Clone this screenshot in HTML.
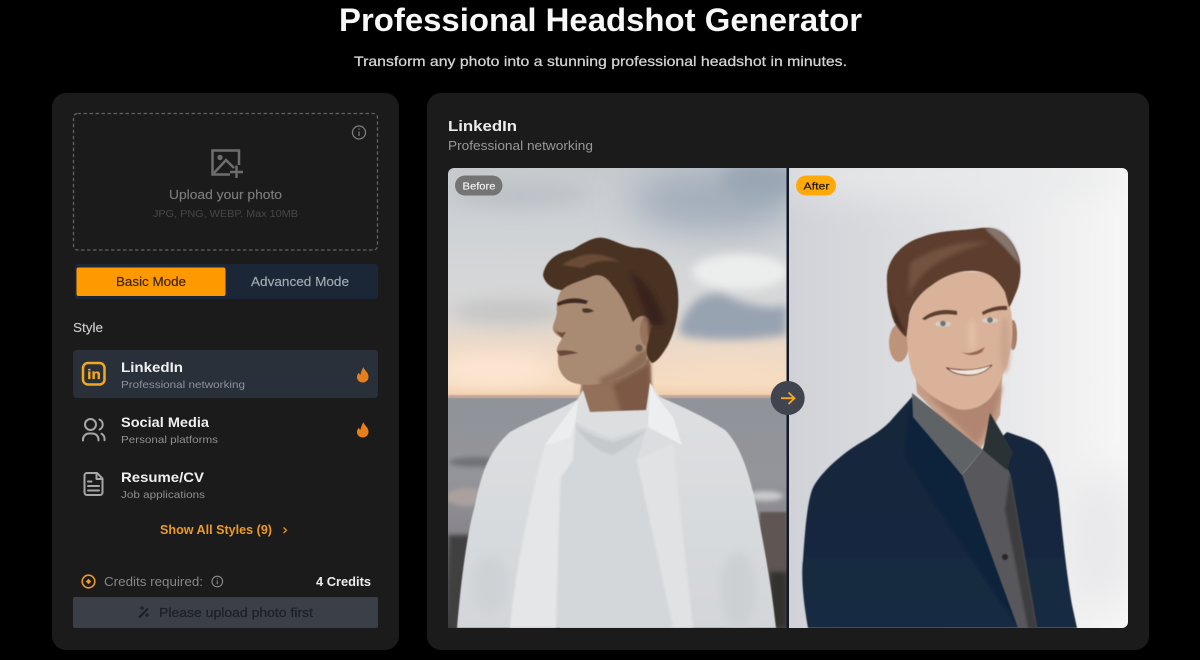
<!DOCTYPE html>
<html lang="en">
<head>
<meta charset="utf-8">
<title>Professional Headshot Generator</title>
<style>
html,body{margin:0;padding:0;background:#000;width:1200px;height:660px;overflow:hidden}
svg{display:block}
text{font-family:"Liberation Sans",sans-serif}
.b{font-weight:700}
</style>
</head>
<body>
<svg width="1200" height="660" viewBox="0 0 1200 660" xmlns="http://www.w3.org/2000/svg">
<defs>
<filter id="b05" x="-20%" y="-20%" width="140%" height="140%"><feGaussianBlur stdDeviation="0.5"/></filter>
<filter id="b1" x="-30%" y="-30%" width="160%" height="160%"><feGaussianBlur stdDeviation="1"/></filter>
<filter id="b2" x="-100%" y="-100%" width="300%" height="300%"><feGaussianBlur stdDeviation="2.500"/></filter>
<filter id="b4" x="-100%" y="-100%" width="300%" height="300%"><feGaussianBlur stdDeviation="4.500"/></filter>
<filter id="b8" x="-100%" y="-200%" width="300%" height="500%"><feGaussianBlur stdDeviation="9"/></filter>
<filter id="b16" x="-150%" y="-300%" width="400%" height="700%"><feGaussianBlur stdDeviation="18"/></filter>
<linearGradient id="sky" x1="0" y1="0" x2="0" y2="1">
<stop offset="0" stop-color="#c6cace"/><stop offset=".3" stop-color="#d0d3d6"/><stop offset=".6" stop-color="#d8d8d8"/><stop offset=".76" stop-color="#ebd9c8"/><stop offset=".93" stop-color="#f6dcc0"/><stop offset="1" stop-color="#efc8a6"/>
</linearGradient>
<linearGradient id="sea" x1="0" y1="0" x2="0" y2="1">
<stop offset="0" stop-color="#8f939a"/><stop offset=".35" stop-color="#94959a"/><stop offset=".6" stop-color="#87848a"/><stop offset=".8" stop-color="#5c5a5e"/><stop offset="1" stop-color="#3a3a3d"/>
</linearGradient>
<linearGradient id="aft" x1="0" y1="0" x2="1" y2="0">
<stop offset="0" stop-color="#d0d2d7"/><stop offset=".45" stop-color="#dfe0e3"/><stop offset=".8" stop-color="#efeff0"/><stop offset="1" stop-color="#f7f7f7"/>
</linearGradient>
<linearGradient id="shirt" x1="0" y1="0" x2="0" y2="1">
<stop offset="0" stop-color="#dee0e2"/><stop offset="1" stop-color="#d3d6d9"/>
</linearGradient>
<linearGradient id="suit" x1="0" y1="0" x2="0" y2="1">
<stop offset="0" stop-color="#17263a"/><stop offset="1" stop-color="#142a43"/>
</linearGradient>
<clipPath id="cb"><path d="M454 168H786.500V628H448V174a6 6 0 0 1 6-6z"/></clipPath>
<clipPath id="ca"><path d="M789 168H1122a6 6 0 0 1 6 6V622a6 6 0 0 1-6 6H789z"/></clipPath>
</defs>

<rect width="1200" height="660" fill="#000"/>
<text x="339" y="31" class="b" font-size="32" fill="#f8f8f8" textLength="523" lengthAdjust="spacingAndGlyphs">Professional Headshot Generator</text>
<text x="354" y="66" font-size="14" fill="#d4d4d4" stroke="#d4d4d4" stroke-width=".25" textLength="493" lengthAdjust="spacingAndGlyphs">Transform any photo into a stunning professional headshot in minutes.</text>

<!-- Left panel -->
<rect x="52" y="93" width="347" height="557" rx="14" fill="#1b1b1c"/>
<rect x="73.500" y="113.500" width="304" height="136.500" rx="4" fill="none" stroke="#626262" stroke-width="1.300" stroke-dasharray="3.500 2.500"/>
<g fill="none" stroke="#7b7b7b" stroke-width="1.300"><circle cx="359" cy="132.500" r="6.500"/><path d="M359 131.500v4.500"/><path d="M359 128.500v1.200"/></g>
<g fill="none" stroke="#6e6e6e" stroke-width="2.500">
<path d="M230 174.500H212.500V150.500H239V165"/><path d="M214 173L226 160L234 168"/>
<path d="M230 172H243M236.500 165.500V178" stroke-width="2.400"/>
</g>
<circle cx="220" cy="157.500" r="2.700" fill="#6e6e6e"/>
<text x="169" y="199" font-size="12.500" fill="#7b7b7b" stroke="#7b7b7b" stroke-width=".15" textLength="113" lengthAdjust="spacingAndGlyphs">Upload your photo</text>
<text x="153" y="217" font-size="10.500" fill="#474747" textLength="145" lengthAdjust="spacingAndGlyphs">JPG, PNG, WEBP. Max 10MB</text>

<rect x="75" y="264" width="303" height="35" rx="3" fill="#1b2736"/>
<rect x="76.500" y="267.500" width="149" height="28.500" rx="2" fill="#ff9900"/>
<text x="116" y="286" font-size="12.500" fill="#402804" stroke="#402804" stroke-width=".2" textLength="70" lengthAdjust="spacingAndGlyphs">Basic Mode</text>
<text x="251" y="286" font-size="12.500" fill="#a3a9b0" stroke="#a3a9b0" stroke-width=".15" textLength="98" lengthAdjust="spacingAndGlyphs">Advanced Mode</text>

<text x="73" y="332" font-size="12.500" fill="#c9c9c9" stroke="#c9c9c9" stroke-width=".15" textLength="30" lengthAdjust="spacingAndGlyphs">Style</text>

<rect x="73" y="350" width="305" height="48" rx="4" fill="#2a303a"/>
<rect x="83" y="363" width="21.500" height="21.500" rx="5" fill="none" stroke="#f0a91e" stroke-width="2.500"/>
<text x="87.300" y="379" class="b" font-size="14" fill="#f0a91e" stroke="#f0a91e" stroke-width=".3" textLength="13.500" lengthAdjust="spacingAndGlyphs">in</text>

<text x="121" y="372" class="b" font-size="14" fill="#efefef" textLength="62" lengthAdjust="spacingAndGlyphs">LinkedIn</text>
<text x="121" y="388" font-size="10.500" fill="#8d929a" textLength="124" lengthAdjust="spacingAndGlyphs">Professional networking</text>
<path id="f1" d="M363.500 367c.3 3 4.800 5 5 9.500c.2 3.500-2.500 6-5.800 6s-6-2.500-5.700-5.700c.1-1.700 1-3.100 2-4c.2 1.200.7 1.800 1.500 2c.3-3 1.800-5.500 3-7.800z" fill="#e67e1c"/>

<g fill="none" stroke="#a6a6a6" stroke-width="2" stroke-linecap="round">
<circle cx="90.500" cy="424.500" r="5.500"/><path d="M83 440.500v-1a6 6 0 0 1 6-6h3.500a6 6 0 0 1 6 6v1"/><path d="M99.500 419.500a5.500 5.500 0 0 1 0 10"/><path d="M101.500 433.800a6 6 0 0 1 3 5.500v1"/>
</g>
<text x="121" y="427" class="b" font-size="14" fill="#efefef" textLength="88" lengthAdjust="spacingAndGlyphs">Social Media</text>
<text x="121" y="443" font-size="10.500" fill="#8f8f8f" textLength="97" lengthAdjust="spacingAndGlyphs">Personal platforms</text>
<use href="#f1" y="55"/>

<g fill="none" stroke="#a6a6a6" stroke-width="2" stroke-linecap="round" stroke-linejoin="round">
<path d="M97 473H87a2.500 2.500 0 0 0-2.500 2.500v17a2.500 2.500 0 0 0 2.500 2.500h13a2.500 2.500 0 0 0 2.500-2.500V478.500z"/><path d="M96.500 473.500v5.500h6"/><path d="M88 481.500h3.500M88 486h11M88 490.500h11"/>
</g>
<text x="121" y="482" class="b" font-size="14" fill="#efefef" textLength="83" lengthAdjust="spacingAndGlyphs">Resume/CV</text>
<text x="121" y="498" font-size="10.500" fill="#8f8f8f" textLength="84" lengthAdjust="spacingAndGlyphs">Job applications</text>

<text x="160" y="534" class="b" font-size="12.500" fill="#ee9a22" textLength="112" lengthAdjust="spacingAndGlyphs">Show All Styles (9)</text>
<path d="M283.500 527.500l3 2.800-3 2.800" fill="none" stroke="#ee9a22" stroke-width="1.200"/>

<circle cx="88.500" cy="581.500" r="6.300" fill="none" stroke="#ee9a22" stroke-width="1.600"/>
<path d="M88.500 578.800l2.700 2.700-2.700 2.700-2.700-2.700z" fill="#ee9a22"/>
<text x="104" y="586" font-size="12.500" fill="#868686" textLength="99" lengthAdjust="spacingAndGlyphs">Credits required:</text>
<g fill="none" stroke="#8a8a8a" stroke-width="1.100"><circle cx="217.300" cy="581.500" r="5.300"/><path d="M217.300 580.500v3.800M217.300 578.200v1"/></g>
<text x="316" y="586" class="b" font-size="12.500" fill="#ececec" textLength="55" lengthAdjust="spacingAndGlyphs">4 Credits</text>

<rect x="73" y="597" width="305" height="31" rx="2" fill="#3b4048"/>
<g stroke="#1d2025" fill="none" stroke-width="2.200"><path d="M139 617.500l9-9"/><path d="M142 606v4M140 608h4M147 613v4M145 615h4" stroke-width="1.300"/></g>
<text x="159" y="617" font-size="12.500" fill="#1d2025" stroke="#1d2025" stroke-width=".25" textLength="154" lengthAdjust="spacingAndGlyphs">Please upload photo first</text>

<!-- Right panel -->
<rect x="427" y="93" width="722" height="557" rx="14" fill="#1b1b1c"/>
<text x="448" y="131" class="b" font-size="15" fill="#ececec" textLength="69" lengthAdjust="spacingAndGlyphs">LinkedIn</text>
<text x="448" y="150" font-size="12.500" fill="#989898" textLength="145" lengthAdjust="spacingAndGlyphs">Professional networking</text>

<rect x="786" y="168" width="4" height="460" fill="#111926"/>

<!-- BEFORE image -->
<g clip-path="url(#cb)">
<rect x="448" y="168" width="339" height="232" fill="url(#sky)"/>
<ellipse cx="715" cy="200" rx="85" ry="32" fill="#a3aebb" filter="url(#b16)"/>
<ellipse cx="760" cy="180" rx="40" ry="20" fill="#9aa6b4" filter="url(#b8)"/>
<ellipse cx="520" cy="195" rx="70" ry="12" fill="#bcc1c7" filter="url(#b8)"/>
<ellipse cx="740" cy="272" rx="48" ry="18" fill="#eceded" filter="url(#b4)"/>
<path d="M680 325C690 300 705 290 725 295C745 305 770 310 787 305V335C750 340 710 342 680 335z" fill="#98a3b1" filter="url(#b4)"/>
<ellipse cx="510" cy="312" rx="60" ry="12" fill="#c4c3c3" filter="url(#b8)"/>
<ellipse cx="495" cy="370" rx="60" ry="16" fill="#fce6d2" filter="url(#b8)"/>
<ellipse cx="730" cy="372" rx="55" ry="10" fill="#f6dcc2" filter="url(#b8)"/>
<rect x="448" y="397" width="339" height="231" fill="url(#sea)"/>
<rect x="448" y="395" width="339" height="3" fill="#c4a898" filter="url(#b05)"/>
<ellipse cx="475" cy="462" rx="26" ry="5" fill="#707278" filter="url(#b2)"/>
<ellipse cx="468" cy="497" rx="22" ry="9" fill="#aaa09f" filter="url(#b2)"/>
<ellipse cx="765" cy="496" rx="18" ry="5" fill="#c8cacc" filter="url(#b2)"/>
<path d="M760 512H787V628H755z" fill="#5e5452" filter="url(#b1)"/>
<path d="M770 572H787V628H770z" fill="#33302f" filter="url(#b2)"/>
<path d="M448 535H472V628H448z" fill="#403f41" filter="url(#b2)"/>

<!-- neck -->
<path d="M582 378L650 358L652 405L648 428L613 440L578 420z" fill="#93705a" filter="url(#b1)"/>
<path d="M612 385L650 362L650 425L622 432Q622 405 612 385z" fill="#7b5844" filter="url(#b2)"/>
<!-- open shirt -->
<path d="M457 628C462 570 468 530 475 505C482 470 490 450 510 432C535 418 560 410 577 400L583 390L590 412L646 410L650 383L660 397C690 410 710 420 725 430C740 445 748 470 755 500C765 550 772 590 776 628z" fill="url(#shirt)" filter="url(#b05)"/>
<path d="M573 420Q590 432 613 438Q632 432 647 427L637 460L673 628H560C558 560 558 500 563 470z" fill="#d4d7da" filter="url(#b05)"/>
<path d="M575 425Q590 436 613 442Q632 436 646 430Q625 450 612 455Q590 450 575 425z" fill="#c6c9cc" filter="url(#b1)"/>
<path d="M545 445L578 400L575 423L573 460L560 478L556 628H510C516 560 535 480 545 445z" fill="#e4e6e7" filter="url(#b1)"/>
<path d="M545 445L578 400L575 423L570 438z" fill="#ecedee" filter="url(#b05)"/>
<path d="M650 383L648 427L682 445L673 417L657 397z" fill="#eceeef" filter="url(#b05)"/>
<path d="M637 460L673 443L693 628H673z" fill="#e0e2e4" filter="url(#b1)"/>
<ellipse cx="738" cy="590" rx="18" ry="38" fill="#cdd0d3" filter="url(#b4)"/>
<ellipse cx="490" cy="585" rx="18" ry="30" fill="#cfd2d5" filter="url(#b4)"/>
<!-- face -->
<path d="M563 287C558 295 556 303 557 312C556 320 552 325 553 330C555 335 560 337 562 338C560 343 556 347 557 351C559 356 557 362 559 368C562 376 567 382 578 384C600 388 625 378 645 365L652 330L640 290L590 268z" fill="#a98a72" filter="url(#b05)"/>
<path d="M600 386Q625 380 645 365L650 350L640 352Q620 372 600 378z" fill="#8a6a55" filter="url(#b2)"/>
<ellipse cx="648" cy="331" rx="8" ry="16" fill="#97735c" filter="url(#b05)"/>
<ellipse cx="651" cy="331" rx="3" ry="10" fill="#6d4e3d" filter="url(#b1)"/>
<circle cx="639" cy="348" r="3.500" fill="#6a594d" filter="url(#b05)"/>
<path d="M557 303Q572 295 588 301L586 304Q570 301 558 306z" fill="#3d2a20" filter="url(#b05)"/>
<path d="M582 309Q588 307 594 311Q587 314 583 312z" fill="#4a352a" filter="url(#b05)"/>
<path d="M557 351Q568 349 578 353L560 356z" fill="#6a4637" filter="url(#b05)"/>
<path d="M554 329Q559 334 566 332L562 338z" fill="#6f4b3a" filter="url(#b05)"/>
<!-- hair -->
<path d="M543 275C545 262 556 252 572 250C585 242 595 236 604 238C615 240 625 248 640 248C660 250 672 262 676 280C681 300 678 325 668 345C662 355 657 362 652 363C647 358 645 352 648 342L652 325C650 315 640 312 633 322C628 310 622 295 612 285C608 278 600 272 590 277C578 282 568 284 562 290C555 290 545 285 543 275z" fill="#4a3024" filter="url(#b05)"/>
<path d="M562 265Q590 245 620 262Q598 258 582 268z" fill="#6b4b39" filter="url(#b1)"/>
<path d="M630 272Q655 285 665 325L650 325z" fill="#37231a" filter="url(#b2)"/>
</g>

<!-- AFTER image -->
<g clip-path="url(#ca)">
<rect x="789" y="168" width="339" height="460" fill="url(#aft)"/>
<ellipse cx="950" cy="175" rx="180" ry="20" fill="#e9eaeb" filter="url(#b16)"/>
<ellipse cx="1100" cy="540" rx="36" ry="70" fill="#e9e9eb" filter="url(#b16)"/>
<!-- neck -->
<path d="M915 365L917 393L977 455L1000 415L1003 365z" fill="#c8a08a" filter="url(#b05)"/>
<path d="M917 385Q955 420 1003 385L995 415L977 445z" fill="#b08672" filter="url(#b2)"/>
<!-- suit -->
<path d="M808 628C803 600 801 575 803 560C805 530 807 505 812 490C818 475 840 455 860 443C875 435 888 425 893 418L912 397L962 475L1007 432C1020 437 1035 440 1043 449C1052 460 1057 480 1059 500C1062 530 1066 570 1072 605L1077 628z" fill="url(#suit)" filter="url(#b05)"/>
<path d="M912 397L962 475L1018 620L1020 628L1000 600L930 495L905 455z" fill="#11213a" filter="url(#b1)"/>
<!-- shirt -->
<path d="M962 475L990 440L1010 473L1037 628H1018z" fill="#58595c" filter="url(#b05)"/>
<path d="M1010 473L1037 628H1028L1005 510z" fill="#3c3e41" filter="url(#b1)"/>
<path d="M912 393L983 450L962 475L913 417z" fill="#616366" filter="url(#b05)"/>
<path d="M990 413L1013 452L1007 470L983 450L987 430z" fill="#2c3035" filter="url(#b05)"/>
<circle cx="1005" cy="557" r="3" fill="#25282c" filter="url(#b05)"/>
<!-- face -->
<ellipse cx="899" cy="343" rx="10" ry="19" fill="#bd937a" filter="url(#b05)"/>
<ellipse cx="1013" cy="335" rx="4" ry="15" fill="#a67c64" filter="url(#b05)"/>
<path d="M907 320C906 340 908 358 912 372C917 385 930 398 957 409C972 412 985 405 992 396C1002 380 1010 360 1012 340C1014 320 1010 300 1003 285L993 272L947 272L917 297z" fill="#d9b299" filter="url(#b05)"/>
<ellipse cx="1005" cy="345" rx="5" ry="28" fill="#cba58e" filter="url(#b2)"/>
<ellipse cx="972" cy="335" rx="4" ry="16" fill="#e2bfa8" filter="url(#b2)"/>
<path d="M922 319Q935 307 957 311L957 315Q938 312 925 320z" fill="#5d3f2f" filter="url(#b05)"/>
<path d="M982 312Q995 305 1007 306L1007 310Q995 309 983 315z" fill="#5d3f2f" filter="url(#b05)"/>
<ellipse cx="943" cy="324" rx="8" ry="2.600" fill="#d8cfc8" filter="url(#b05)"/><circle cx="943" cy="323.500" r="2.800" fill="#6b7678" filter="url(#b05)"/>
<ellipse cx="990" cy="320.500" rx="8" ry="2.600" fill="#d8cfc8" filter="url(#b05)"/><circle cx="990" cy="320" r="2.800" fill="#6b7678" filter="url(#b05)"/>
<path d="M961 352Q970 356 985 347L982 352Q972 358 961 352z" fill="#97684f" filter="url(#b05)"/>
<path d="M947 368Q970 373 992 365Q982 376 966 375Q953 374 947 368z" fill="#efe6dd" stroke="#6b352b" stroke-width=".9" filter="url(#b05)"/>
<!-- hair -->
<path d="M887 283C886 270 890 262 895 255C903 245 912 240 922 237C940 230 960 231 980 228C1000 226 1012 240 1017 253C1022 265 1022 280 1015 295C1012 302 1011 305 1009 307L1005 292C998 280 990 272 975 271C960 270 945 275 932 285C920 293 912 303 909 315C908 325 907 333 906 337C900 332 893 322 891 312C888 302 887 292 887 283z" fill="#5c3e2d" filter="url(#b05)"/>
<path d="M910 263Q945 240 990 242Q950 252 928 270Q915 280 908 298z" fill="#735240" filter="url(#b2)"/>
<path d="M985 229C1000 224 1016 240 1020 265L1003 246z" fill="#85756b" filter="url(#b1)"/>
<path d="M890 300L906 335L895 322L887 285z" fill="#3f2a1f" filter="url(#b1)"/>
</g>

<!-- Labels -->
<rect x="455" y="175.500" width="47.500" height="20" rx="10" fill="#747474"/>
<text x="462.500" y="189.500" font-size="10.500" fill="#f2f2f2" stroke="#f2f2f2" stroke-width=".15" textLength="33" lengthAdjust="spacingAndGlyphs">Before</text>
<rect x="796" y="175.500" width="40" height="20" rx="10" fill="#ffa90a"/>
<text x="803.500" y="189.500" font-size="10.500" fill="#231705" stroke="#231705" stroke-width=".2" textLength="26" lengthAdjust="spacingAndGlyphs">After</text>

<!-- Handle -->
<circle cx="787.700" cy="398" r="17" fill="#3f444e"/>
<path d="M781 398.200H794M788.500 392.500L794.500 398.200L788.500 404" fill="none" stroke="#f9a61a" stroke-width="1.800"/>
</svg>
</body>
</html>
